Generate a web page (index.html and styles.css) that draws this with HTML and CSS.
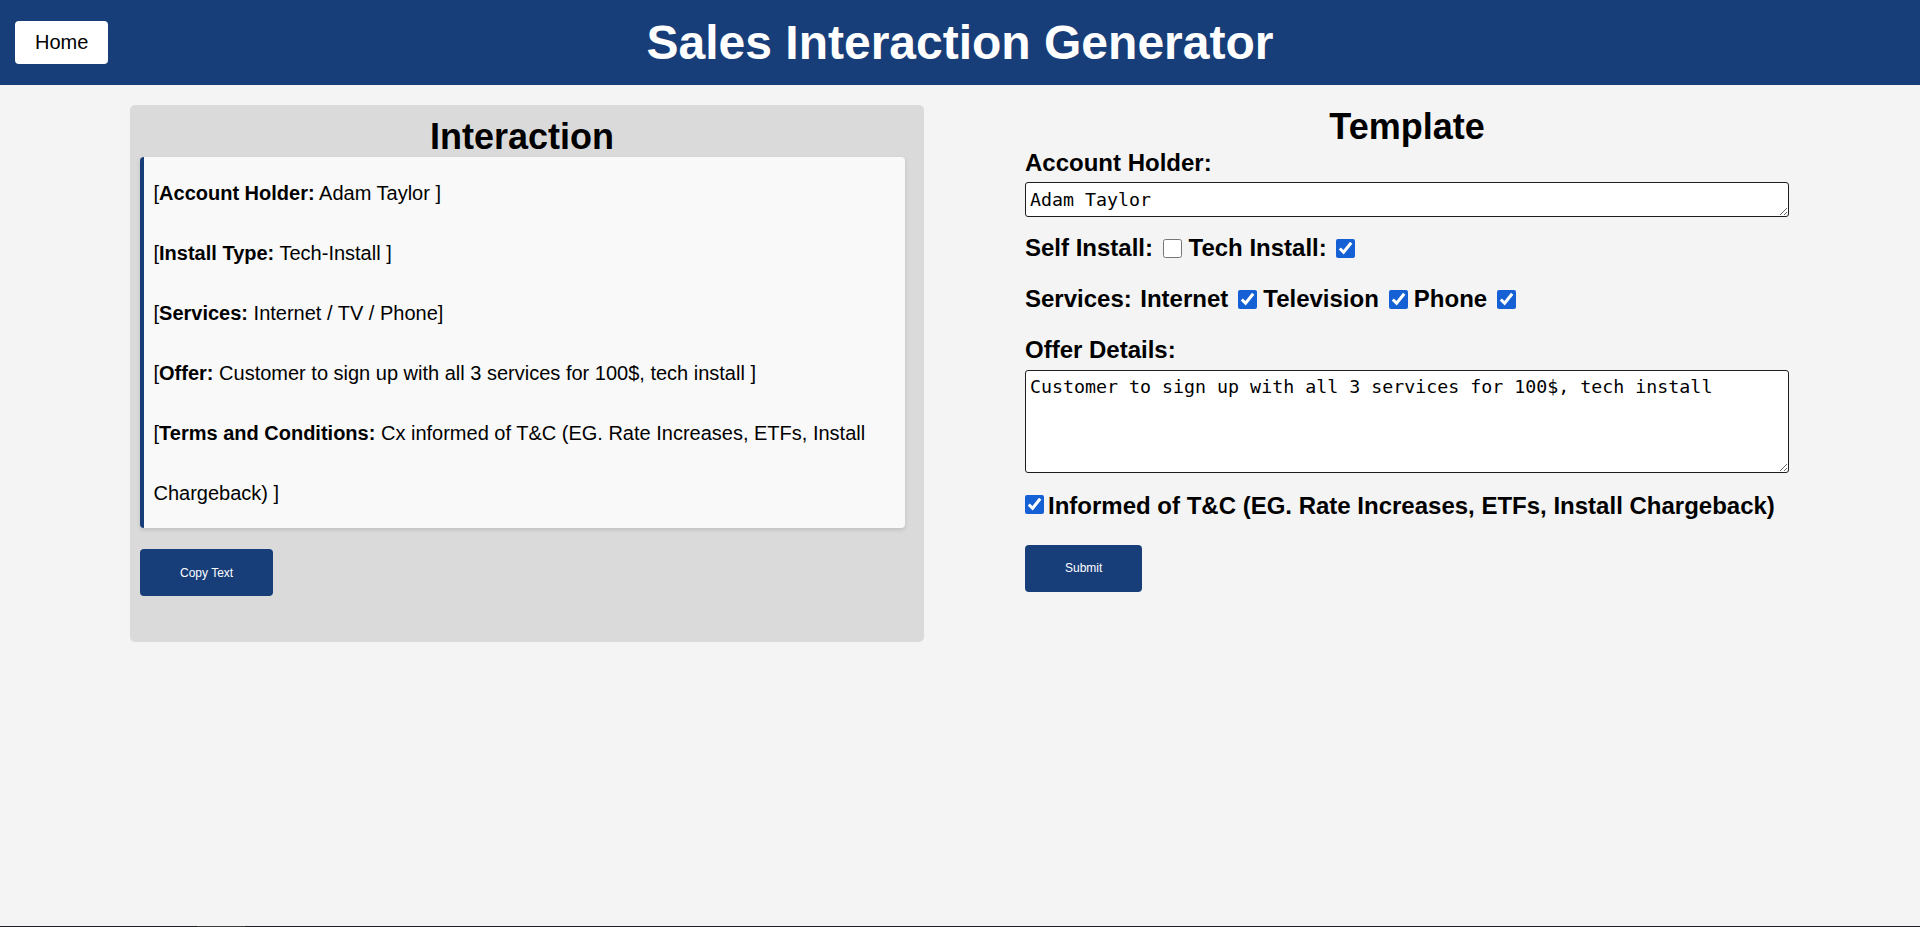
FILE: index.html
```html
<!DOCTYPE html>
<html lang="en">
<head>
<meta charset="utf-8">
<title>Sales Interaction Generator</title>
<link rel="stylesheet" href="styles.css">
</head>
<body>
<div class="page">
  <header class="topbar">
    <button class="home-btn" type="button">Home</button>
    <h1 class="title">Sales Interaction Generator</h1>
    <div class="topbar-spacer"></div>
  </header>

  <main class="columns">
    <section class="panel">
      <h2 class="panel-title">Interaction</h2>
      <div class="card">
        <p>[<b>Account Holder:</b> Adam Taylor ]</p>
        <p>[<b>Install Type:</b> Tech-Install ]</p>
        <p>[<b>Services:</b> Internet / TV / Phone]</p>
        <p>[<b>Offer:</b> Customer to sign up with all 3 services for 100$, tech install ]</p>
        <p>[<b>Terms and Conditions:</b> <span>Cx informed of T&amp;C (EG. Rate Increases, ETFs, Install</span> <span>Chargeback) ]</span></p>
      </div>
      <button class="action-btn copy-btn" type="button">Copy Text</button>
    </section>

    <section class="template">
      <h2 class="template-title">Template</h2>
      <label class="field-label holder-label" for="holder">Account Holder:</label>
      <textarea id="holder" class="input holder-input">Adam Taylor</textarea>

      <div class="row row-install">
        <span class="row-text">Self Install:</span>
        <input class="check" type="checkbox">
        <span class="row-text">Tech Install:</span>
        <input class="check" type="checkbox" checked>
      </div>

      <div class="row row-services">
        <span class="row-text services-lead">Services:</span>
        <span class="row-text">Internet</span>
        <input class="check" type="checkbox" checked>
        <span class="row-text">Television</span>
        <input class="check" type="checkbox" checked>
        <span class="row-text">Phone</span>
        <input class="check" type="checkbox" checked>
      </div>

      <label class="field-label offer-label" for="offer">Offer Details:</label>
      <textarea id="offer" class="input offer-input">Customer to sign up with all 3 services for 100$, tech install</textarea>

      <div class="row row-terms">
        <input class="check check-first" type="checkbox" checked>
        <span class="row-text">Informed of T&amp;C (EG. Rate Increases, ETFs, Install Chargeback)</span>
      </div>

      <button class="action-btn submit-btn" type="button">Submit</button>
    </section>
  </main>

  <div class="bottom-edge"><span class="bottom-thumb"></span></div>
</div>
</body>
</html>
```

FILE: styles.css
```css
* {
  box-sizing: border-box;
}

html, body {
  margin: 0;
  padding: 0;
}

body {
  background: #f4f4f4;
  font-family: "Liberation Sans", Arial, sans-serif;
  color: #000;
}

.page {
  min-height: 100vh;
  display: flex;
  flex-direction: column;
}

/* Header */
.topbar {
  height: 85px;
  background: #183e7a;
  display: grid;
  grid-template-columns: 1fr auto 1fr;
  align-items: center;
  padding: 0 15px;
}

.home-btn {
  justify-self: start;
  background: #ffffff;
  color: #000;
  border: none;
  border-radius: 4px;
  font-family: "Liberation Sans", Arial, sans-serif;
  font-size: 20px;
  line-height: 23px;
  padding: 10px 20px;
  margin-top: -1px;
}

.title {
  margin: 0;
  color: #ffffff;
  font-size: 48px;
  font-weight: bold;
  line-height: 55px;
  white-space: nowrap;
}

/* Columns */
.columns {
  display: flex;
  align-items: flex-start;
  gap: 101px;
  margin-top: 20px;
  padding: 0 131px 0 130px;
}

.panel {
  width: 794px;
  flex: none;
  background: #dadada;
  border-radius: 5px;
  padding: 11px 19.5px 45.7px 9.5px;
}

.panel-title {
  margin: 0;
  text-align: center;
  font-size: 36px;
  font-weight: bold;
  line-height: 41.4px;
}

.card {
  background: #f9f9f9;
  border-left: 4px solid #183e7a;
  border-radius: 4px;
  box-shadow: 0 2px 4px rgba(0, 0, 0, 0.12);
  padding: 6px 10px 5px 10px;
  font-size: 20px;
  line-height: 60px;
}

.card p {
  margin: 0;
}

.action-btn {
  display: block;
  height: 47px;
  padding: 0 40px;
  background: #183e7a;
  color: #ffffff;
  border: none;
  border-radius: 4px;
  font-family: "Liberation Sans", Arial, sans-serif;
  font-size: 12px;
}

.copy-btn {
  margin-top: 21px;
  margin-left: 0.5px;
}

/* Template column */
.template {
  flex: 1;
  min-width: 0;
}

.template-title {
  margin: 1px 0 0;
  text-align: center;
  font-size: 36px;
  font-weight: bold;
  line-height: 41.4px;
}

.field-label {
  display: block;
  font-size: 24px;
  font-weight: bold;
  line-height: 27.6px;
}

.holder-label {
  margin-top: 1.5px;
}

.input {
  display: block;
  width: 100%;
  margin: 5px 0 0;
  border: 1px solid #1e1e1e;
  border-radius: 3px;
  background: #ffffff;
  color: #000;
  font-family: "DejaVu Sans Mono", "Liberation Mono", monospace;
  font-size: 18.3px;
  line-height: 21.3px;
  padding: 5px 4px;
}

.holder-input {
  height: 35px;
  padding-top: 6.5px;
  padding-bottom: 0;
}

.offer-label {
  margin-top: 23.2px;
}

.offer-input {
  height: 103px;
  margin-top: 6.5px;
}

.row {
  display: flex;
  align-items: center;
  height: 27.6px;
  font-size: 24px;
  font-weight: bold;
  white-space: nowrap;
}

.row-install {
  margin-top: 18px;
}

.row-services {
  margin-top: 23.2px;
}

.row-terms {
  margin-top: 19px;
}

.services-lead {
  margin-right: 8.5px;
}

.check {
  width: 19px;
  height: 19px;
  margin: 0 7px 0 9.5px;
  accent-color: #1560d4;
  flex: none;
}

.row-services .check {
  margin-left: 10px;
  margin-right: 6px;
}

.check-first {
  margin: -3px 4px 0 0;
}

.submit-btn {
  margin-top: 25.2px;
}

/* bottom edge line */
.bottom-edge {
  margin-top: auto;
  height: 1px;
  background: #202124;
  display: flex;
}

.bottom-thumb {
  width: 48px;
  margin-left: 197px;
  background: #3c3c3c;
}
```
